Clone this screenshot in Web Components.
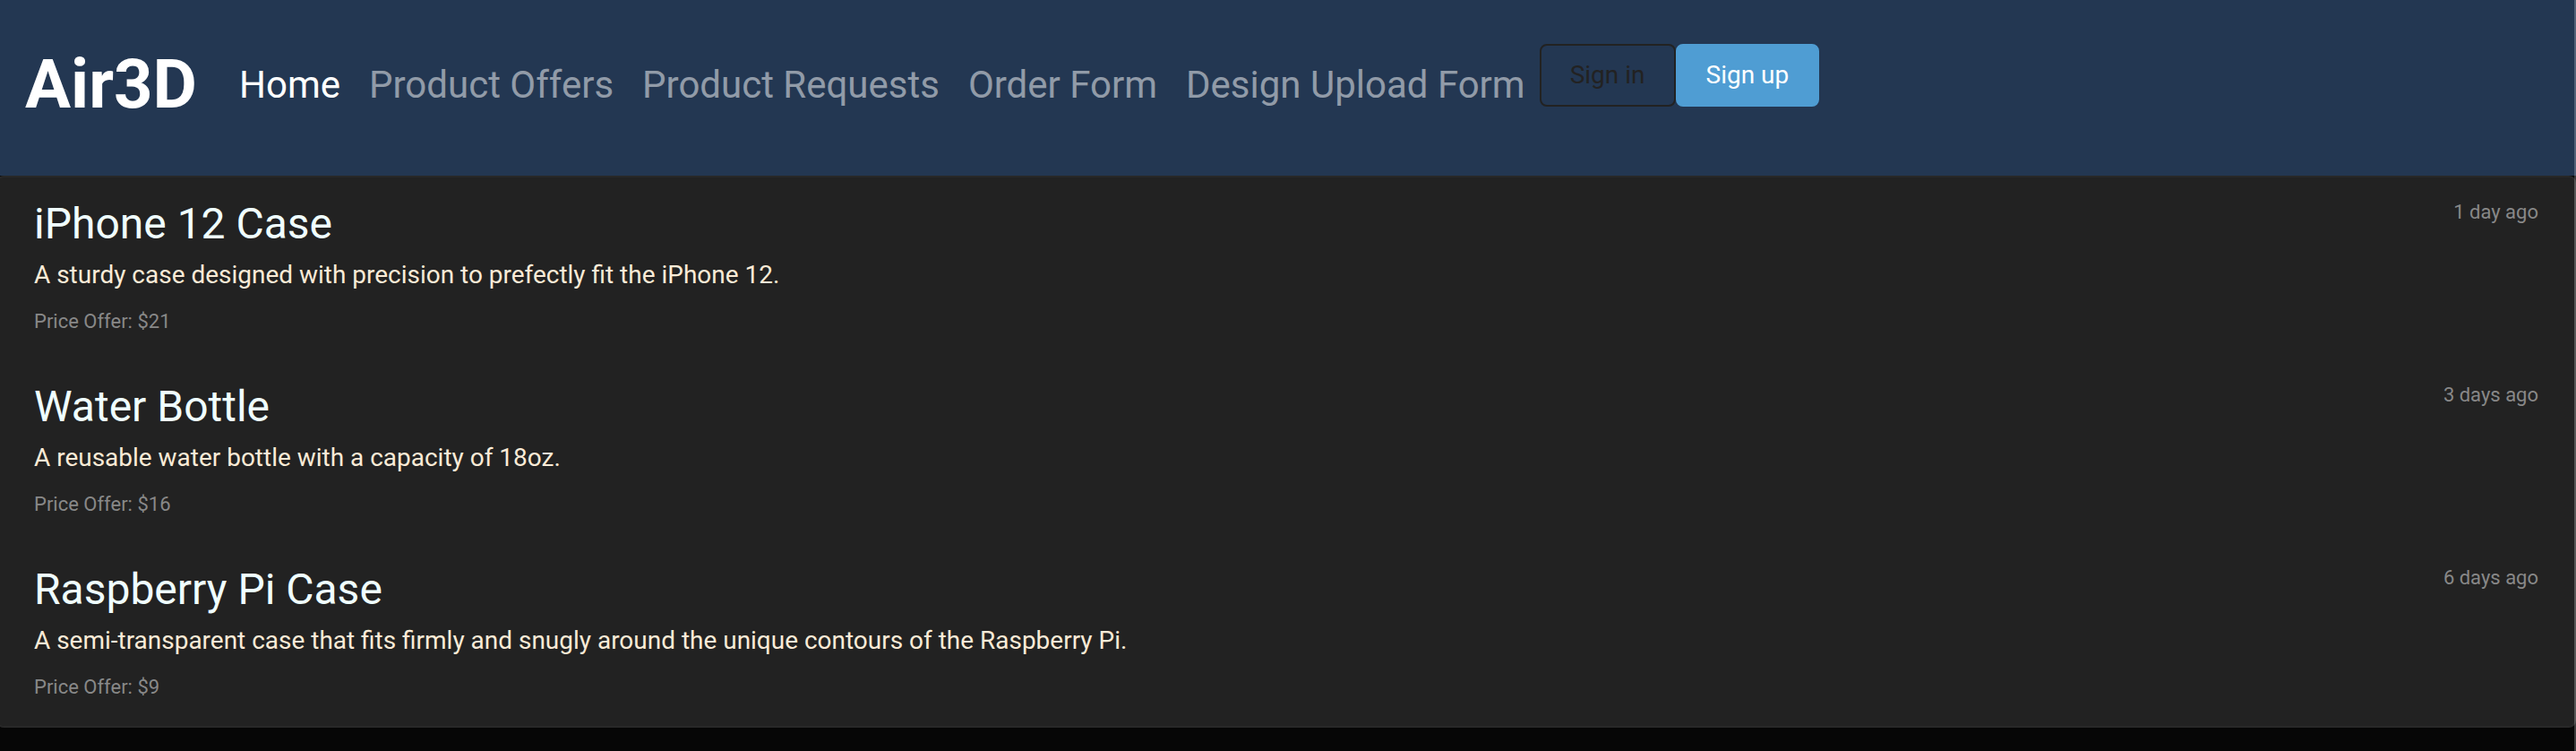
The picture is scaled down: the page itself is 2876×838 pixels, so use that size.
<!DOCTYPE html>
<html lang="en"><head><meta charset="utf-8"><title>Air3D</title>
<style>
html,body{margin:0;height:838px;overflow:hidden;background:#060606;font:400 28px/42px Roboto,sans-serif}
</style></head><body>
<air-app></air-app>
<script>
const make=(name,html)=>customElements.define(name,class extends HTMLElement{
  constructor(){super();this.attachShadow({mode:'open'}).innerHTML=html;}
});
make('nav-link',`<style>:host{display:block;font-size:42px;line-height:62px;padding:0 16px;color:rgba(255,255,255,.5);white-space:nowrap}:host([active]){color:#fff}</style><slot></slot>`);
make('nav-button',`<style>:host{display:block;box-sizing:border-box;height:70px;padding:12px 32px;border:2px solid #222;border-radius:8px;color:#222;white-space:nowrap}:host([primary]){background:#4f9dd3;border-color:#4f9dd3;color:#fff}</style><slot></slot>`);
make('nav-bar',`<style>:host{display:flex;box-sizing:border-box;height:196px;padding-left:28px;background:#233752;align-items:flex-start}
b{width:191px;font-size:76px;line-height:90px;margin:49px 32px 0 0;color:#fff}nav,div{display:flex}nav{margin-top:64px}div{margin-top:49px}</style>
<b>Air3D</b><nav><nav-link active>Home</nav-link><nav-link>Product Offers</nav-link><nav-link>Product Requests</nav-link><nav-link>Order Form</nav-link><nav-link>Design Upload Form</nav-link></nav>
<div><nav-button>Sign in</nav-button><nav-button primary>Sign up</nav-button></div>`);
make('offer-item',`<style>:host{display:block;box-sizing:border-box;height:204px;padding:23px 40px 0}
header{display:flex;justify-content:space-between}h5{margin:0 0 7px;font:400 48px/58px Roboto,sans-serif;color:azure}p{margin:0 0 14px;font-size:27.97px;color:antiquewhite}small{display:block;font-size:22px;line-height:34px;color:#888}header small{margin-top:-1px}</style>
<header><h5><slot name="title"></slot></h5><small><slot name="age"></slot></small></header><p><slot></slot></p><small><slot name="price"></slot></small>`);
make('offer-list',`<style>:host{display:block;box-sizing:border-box;height:616px;margin-left:-4px;border:2px solid #282828;border-radius:8px;background:#222}</style><slot></slot>`);
make('air-app',`<style>:host{display:block;height:838px;position:relative}i{position:absolute;right:0;top:0;width:2px;height:100%;background:rgba(255,255,255,.22)}</style>
<nav-bar></nav-bar><offer-list>
<offer-item><span slot="title">iPhone 12 Case</span><span slot="age">1 day ago</span>A sturdy case designed with precision to prefectly fit the iPhone 12.<span slot="price">Price Offer: $21</span></offer-item>
<offer-item><span slot="title">Water Bottle</span><span slot="age">3 days ago</span>A reusable water bottle with a capacity of 18oz.<span slot="price">Price Offer: $16</span></offer-item>
<offer-item><span slot="title">Raspberry Pi Case</span><span slot="age">6 days ago</span>A semi-transparent case that fits firmly and snugly around the unique contours of the Raspberry Pi.<span slot="price">Price Offer: $9</span></offer-item>
</offer-list><i></i>`);
</script></body></html>
